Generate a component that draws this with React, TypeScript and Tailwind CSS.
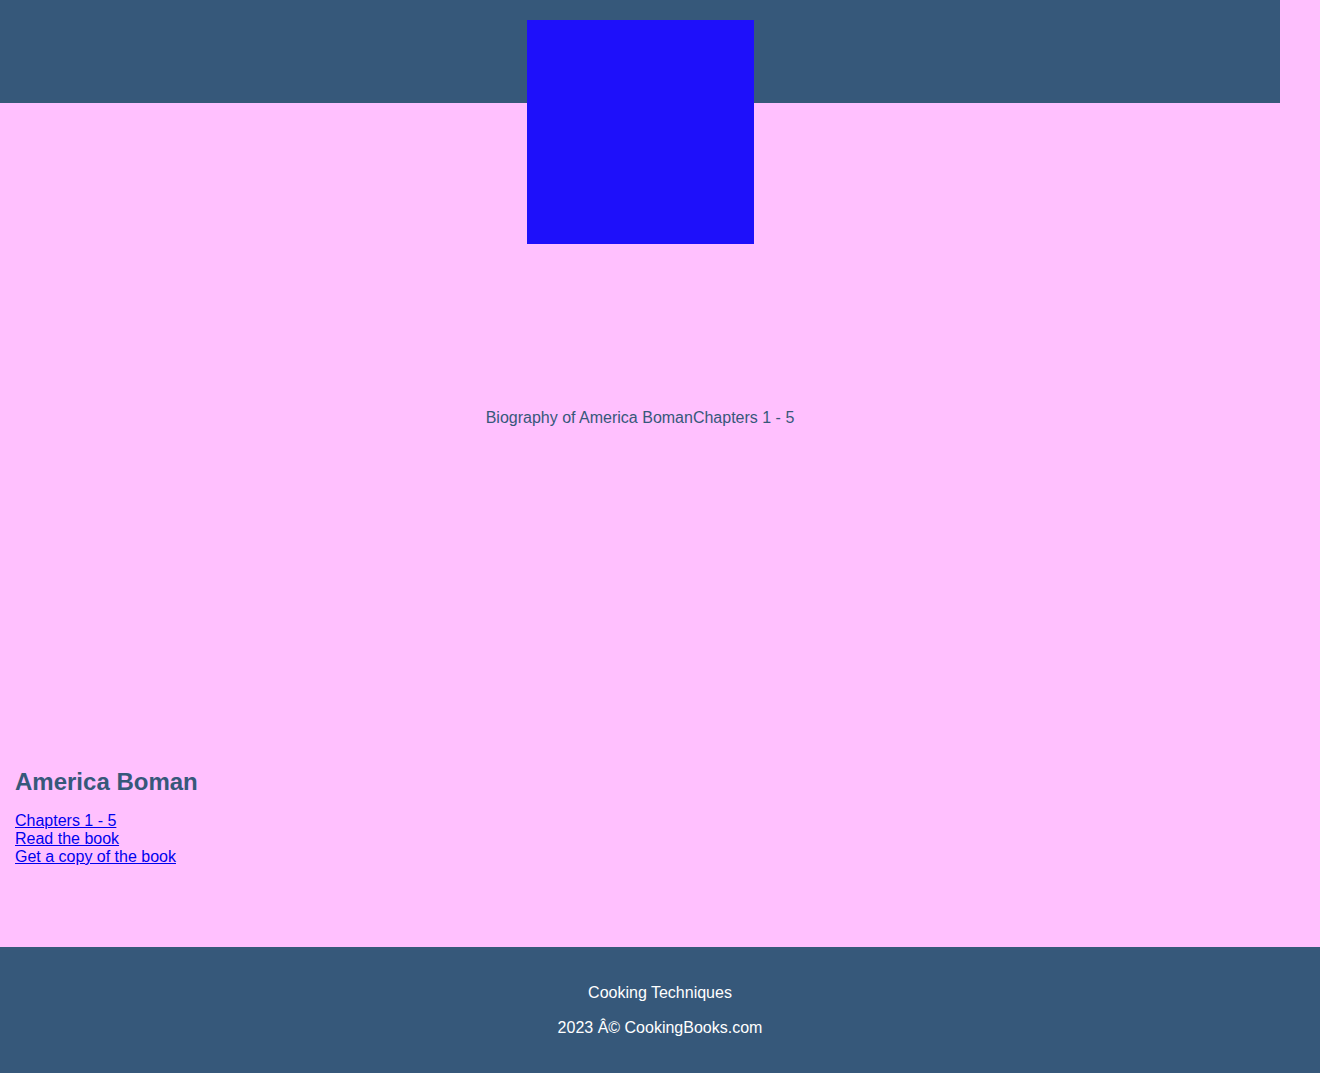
import React from 'react';

export default function App() {
  return (
    <div className="min-h-[1073px] bg-[#ffc0fe] font-['Liberation_Sans',Arial,sans-serif] text-base">
      {/* Header with cover */}
      <header className="w-[1280px] h-[103px] bg-[#36587a] flex justify-center pt-5">
        <div className="w-[227px] h-[224px] shrink-0 bg-[#1e10fa]" />
      </header>

      {/* Hero */}
      <section className="w-[1280px] h-[628px] flex items-center justify-center pt-[2px]">
        <p className="text-[#36587a] leading-[18px]">
          <span>Biography of America Boman</span>
          <span>Chapters 1 - 5</span>
        </p>
      </section>

      {/* Author details */}
      <section className="px-[15px] pt-[37px] pb-[81px]">
        <h2 className="text-[24px] leading-[28px] font-bold text-[#36587a]">America Boman</h2>
        <ul className="mt-[16px] leading-[18px]">
          <li><a href="#" className="text-[#0000ee] underline">Chapters 1 - 5</a></li>
          <li><a href="#" className="text-[#0000ee] underline">Read the book</a></li>
          <li><a href="#" className="text-[#0000ee] underline">Get a copy of the book</a></li>
        </ul>
      </section>

      <footer className="w-full h-[126px] bg-[#36587a] text-white text-center pt-[37px]">
        <p className="leading-[18px]">Cooking Techniques</p>
        <p className="leading-[18px] mt-[17px]">2023 Â© CookingBooks.com</p>
      </footer>
    </div>
  );
}
